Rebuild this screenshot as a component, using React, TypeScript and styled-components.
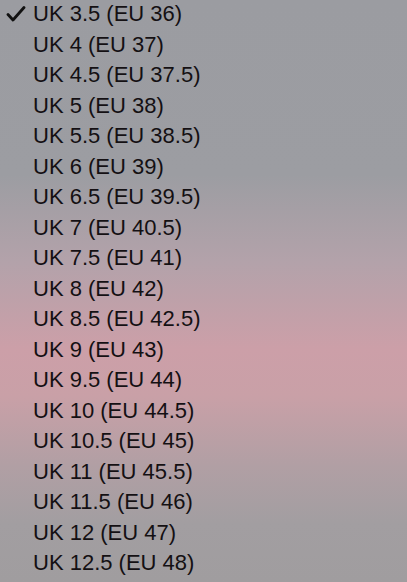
import React from "react";
import styled, { createGlobalStyle } from "styled-components";

const Global = createGlobalStyle`
  html, body { margin: 0; padding: 0; }
  body {
    width: 407px;
    height: 582px;
    overflow: hidden;
    font-family: "Liberation Sans", Arial, sans-serif;
  }
`;

const Sheet = styled.div`
  width: 407px;
  height: 582px;
  overflow: hidden;
  background: linear-gradient(
    180deg,
    #9b9ca1 0%,
    #9c9da2 30%,
    #b3a2aa 45%,
    #cc9fa8 60%,
    #c9a0a7 68%,
    #b19fa4 80%,
    #a29ea1 90%,
    #a09d9f 100%
  );
`;

const List = styled.ul`
  list-style: none;
  margin: -1px 0 0 0;
  padding: 0;
`;

const Row = styled.li`
  display: flex;
  align-items: center;
  height: 30.5px;
  line-height: 30.5px;
  font-size: 22px;
  color: #141013;
`;

const CheckCol = styled.span`
  width: 33px;
  flex: 0 0 33px;
  display: flex;
  align-items: center;
  justify-content: flex-start;
  padding-left: 6px;
  box-sizing: border-box;
`;

const Label = styled.span`
  white-space: nowrap;
`;

const Check = () => (
  <svg width="20" height="16" viewBox="0 0 20 16">
    <polyline
      points="2,8.5 7,14 18,1.5"
      fill="none"
      stroke="#111"
      strokeWidth="2.8"
      strokeLinecap="round"
      strokeLinejoin="round"
    />
  </svg>
);

const sizes: [string, string][] = [
  ["3.5", "36"],
  ["4", "37"],
  ["4.5", "37.5"],
  ["5", "38"],
  ["5.5", "38.5"],
  ["6", "39"],
  ["6.5", "39.5"],
  ["7", "40.5"],
  ["7.5", "41"],
  ["8", "42"],
  ["8.5", "42.5"],
  ["9", "43"],
  ["9.5", "44"],
  ["10", "44.5"],
  ["10.5", "45"],
  ["11", "45.5"],
  ["11.5", "46"],
  ["12", "47"],
  ["12.5", "48"],
];

export default function App() {
  return (
    <>
      <Global />
      <Sheet>
        <List>
          {sizes.map(([uk, eu], i) => (
            <Row key={uk}>
              <CheckCol>{i === 0 ? <Check /> : null}</CheckCol>
              <Label>{`UK ${uk} (EU ${eu})`}</Label>
            </Row>
          ))}
        </List>
      </Sheet>
    </>
  );
}
